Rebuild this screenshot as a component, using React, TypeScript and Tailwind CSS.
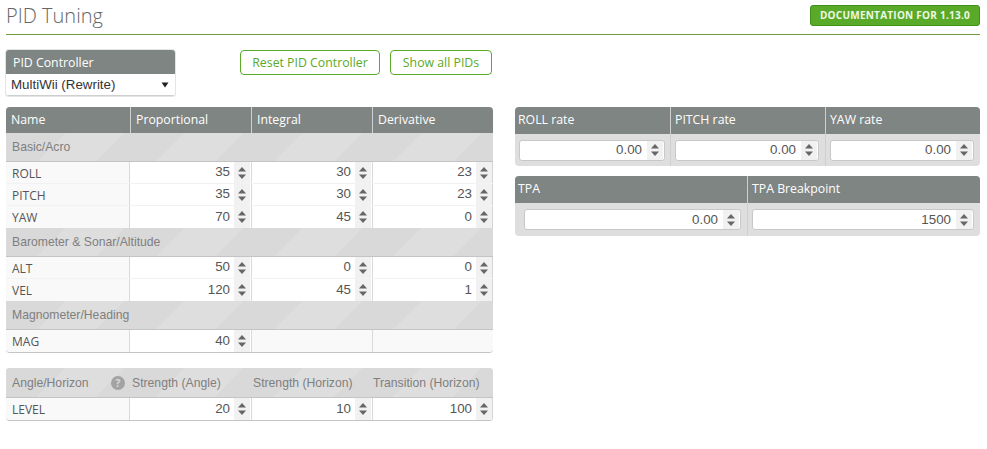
import React from 'react';

const open = "font-['Open_Sans',sans-serif]";
const arial = "font-['Liberation_Sans',Arial,sans-serif]";
const stripes =
  'bg-[repeating-linear-gradient(135deg,#d9d9d9_0px,#d9d9d9_42px,#dedede_42px,#dedede_84px)]';
const bodyCols = 'grid-cols-[123px_122px_121px_121px]';

function Spinner() {
  return (
    <div className="flex h-full w-[16px] shrink-0 items-center justify-center bg-[#f1f1f1]">
      <svg width="10" height="14" viewBox="0 0 10 14" fill="#666">
        <path d="M5 1 9 5.5H1Z" />
        <path d="M1 8.5H9L5 13Z" />
      </svg>
    </div>
  );
}

function NumCell({ value }: { value?: string }) {
  return (
    <div className={`flex h-full items-center justify-end border-l border-[#d9d9d9] pr-[1px] ${value === undefined ? 'bg-[#f9f9f9]' : ''}`}>
      {value !== undefined && (
        <>
          <span className={`${arial} pb-[1px] pr-[4px] text-[13.33px] leading-none text-[#555]`}>{value}</span>
          <Spinner />
        </>
      )}
    </div>
  );
}

function Row({ name, vals, border = true }: { name: string; vals: (string | undefined)[]; border?: boolean }) {
  return (
    <div className={`grid h-[22px] ${bodyCols} ${border ? 'border-b border-[#f2f2f2]' : ''}`}>
      <div className={`${open} flex items-center bg-[#f9f9f9] pl-[6px] pt-[2px] text-[12px] text-[#555]`}>{name}</div>
      {vals.map((v, i) => (
        <NumCell key={i} value={v} />
      ))}
    </div>
  );
}

function Section({ label }: { label: string }) {
  return (
    <div className={`${stripes} ${arial} flex h-[29px] items-center border-b border-[#c4c4c4] pl-[6px] text-[12.2px] text-[#7f7f7f]`}>
      {label}
    </div>
  );
}

function HeadCell({ label, first, pad = 'pl-[5px]' }: { label: string; first?: boolean; pad?: string }) {
  return (
    <div className={`${open} flex items-center ${pad} text-[12.3px] font-medium text-white ${first ? '' : 'border-l border-[#cfcfcf]'}`}>
      {label}
    </div>
  );
}

function BoxInput({ value }: { value: string }) {
  return (
    <div className="flex h-[21px] flex-1 items-center justify-end rounded-[3px] border border-[#c8c8c8] bg-white pr-[1px]">
      <span className={`${arial} pr-[5px] text-[13.33px] leading-none text-[#555]`}>{value}</span>
      <Spinner />
    </div>
  );
}

export default function App() {
  return (
    <div className="h-[449px] w-[987px] overflow-hidden bg-white">
      <div className="ml-[6px] flex h-[35px] w-[974px] items-start justify-between border-b border-[#6f9c3c]">
        <h1 className={`${open} mt-[3px] text-[20px] font-light leading-[25px] text-[#666]`}>PID Tuning</h1>
        <a className={`${open} mt-[5px] flex h-[21px] w-[170px] items-center justify-center rounded-[3px] border border-[#3f8f1c] bg-[#59aa29] text-[10px] font-bold tracking-[0.25px] text-[#eef8e4]`}>
          DOCUMENTATION FOR 1.13.0
        </a>
      </div>

      <div className="ml-[6px] mt-[15px] flex w-[974px] items-start justify-between">
        {/* left column */}
        <div className="w-[487px]">
          <div className="flex items-start">
            <div className="w-[169px] overflow-hidden rounded-[3px] border-b border-[#cfcfcf] shadow-[0_0_0_1px_#e4e4e4]">
              <div className={`${open} flex h-[24px] items-center bg-[#7f8583] pl-[7px] pt-[3px] text-[12.3px] font-medium text-white`}>
                PID Controller
              </div>
              <div className={`${arial} flex h-[21px] items-center justify-between bg-white pl-[5px] pr-[4px] pt-[1px] text-[13.33px] text-[#333]`}>
                <span>MultiWii (Rewrite)</span>
                <svg width="8" height="6" viewBox="0 0 8 6" fill="#222" className="mr-[2px]">
                  <path d="M0.5 0.5H7.5L4 5.5Z" />
                </svg>
              </div>
            </div>
            <div className="ml-[65px] flex gap-[10px]">
              <button className={`${open} h-[25px] w-[140px] rounded-[4px] border border-[#59aa29] bg-white pt-[1px] text-[12.3px] font-medium text-[#59aa29]`}>
                Reset PID Controller
              </button>
              <button className={`${open} h-[25px] w-[102px] rounded-[4px] border border-[#59aa29] bg-white pt-[1px] text-[12.3px] font-medium text-[#59aa29]`}>
                Show all PIDs
              </button>
            </div>
          </div>

          <div className="mt-[11px] overflow-hidden rounded-[4px] border-b border-[#c4c4c4] shadow-[inset_1px_0_0_#d4d4d4,inset_-1px_0_0_#d4d4d4]">
            <div className="grid h-[26px] grid-cols-[124px_121px_121px_121px] bg-[#7f8583]">
              <HeadCell label="Name" first />
              <HeadCell label="Proportional" />
              <HeadCell label="Integral" />
              <HeadCell label="Derivative" />
            </div>
            <Section label="Basic/Acro" />
            <Row name="ROLL" vals={['35', '30', '23']} />
            <Row name="PITCH" vals={['35', '30', '23']} />
            <Row name="YAW" vals={['70', '45', '0']} border={false} />
            <Section label="Barometer & Sonar/Altitude" />
            <Row name="ALT" vals={['50', '0', '0']} />
            <Row name="VEL" vals={['120', '45', '1']} border={false} />
            <Section label="Magnometer/Heading" />
            <Row name="MAG" vals={['40', undefined, undefined]} border={false} />
          </div>

          <div className="mt-[15px] overflow-hidden rounded-[4px] border-b border-[#c4c4c4] shadow-[inset_1px_0_0_#d4d4d4,inset_-1px_0_0_#d4d4d4]">
            <div className={`${stripes} ${arial} grid h-[30px] ${bodyCols} items-center border-b border-[#c4c4c4] pt-[1px] text-[12.2px] text-[#7f7f7f]`}>
              <div className="flex items-center justify-between pl-[6px] pr-[4px]">
                <span>Angle/Horizon</span>
                <span className={`${open} flex h-[14px] w-[14px] items-center justify-center rounded-full bg-[#a3a3a3] text-[10px] font-bold leading-none text-[#dcdcdc]`}>?</span>
              </div>
              <div className="pl-[3px]">Strength (Angle)</div>
              <div className="pl-[2px]">Strength (Horizon)</div>
              <div className="pl-[1px]">Transition (Horizon)</div>
            </div>
            <Row name="LEVEL" vals={['20', '10', '100']} border={false} />
          </div>
        </div>

        {/* right column */}
        <div className="mt-[57px] w-[465px]">
          <div className="overflow-hidden rounded-[4px] bg-[#dedede]">
            <div className="grid h-[27px] grid-cols-[155px_155px_155px] bg-[#7f8583]">
              <HeadCell label="ROLL rate" first pad="pl-[3px]" />
              <HeadCell label="PITCH rate" pad="pl-[4px]" />
              <HeadCell label="YAW rate" pad="pl-[4px]" />
            </div>
            <div className="grid h-[32px] grid-cols-[155px_155px_155px] items-center">
              <div className="flex h-full items-center pl-[4px] pr-[5px]"><BoxInput value="0.00" /></div>
              <div className="flex h-full items-center border-l border-[#cfcfcf] pl-[4px] pr-[6px]"><BoxInput value="0.00" /></div>
              <div className="flex h-full items-center border-l border-[#cfcfcf] pl-[4px] pr-[6px]"><BoxInput value="0.00" /></div>
            </div>
          </div>

          <div className="mt-[10px] overflow-hidden rounded-[4px] bg-[#dedede]">
            <div className="grid h-[27px] grid-cols-[232px_233px] bg-[#7f8583]">
              <HeadCell label="TPA" first pad="pl-[3px]" />
              <HeadCell label="TPA Breakpoint" pad="pl-[4px]" />
            </div>
            <div className="grid h-[33px] grid-cols-[232px_233px] items-center">
              <div className="flex h-full items-center pl-[9px] pr-[6px]"><BoxInput value="0.00" /></div>
              <div className="flex h-full items-center border-l border-[#cfcfcf] pl-[4px] pr-[6px]"><BoxInput value="1500" /></div>
            </div>
          </div>
        </div>
      </div>
    </div>
  );
}
